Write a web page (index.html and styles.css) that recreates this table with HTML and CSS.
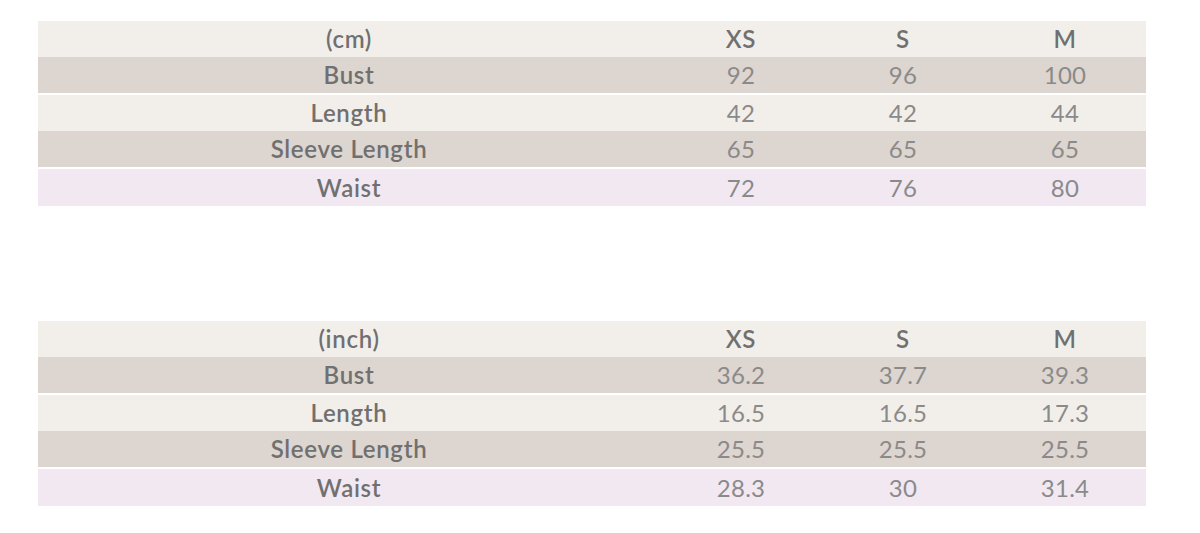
FILE: index.html
```html
<!DOCTYPE html>
<html>
<head>
<meta charset="utf-8">
<link rel="stylesheet" href="styles.css">
</head>
<body>
<div class="page">
  <table class="size-table">
    <colgroup><col class="c-label"><col class="c-size"><col class="c-size"><col class="c-size"></colgroup>
    <tr class="row-light head"><th>(cm)</th><th>XS</th><th>S</th><th>M</th></tr>
    <tr class="row-dark gap"><th>Bust</th><td>92</td><td>96</td><td>100</td></tr>
    <tr class="row-light"><th>Length</th><td>42</td><td>42</td><td>44</td></tr>
    <tr class="row-dark gap"><th>Sleeve Length</th><td>65</td><td>65</td><td>65</td></tr>
    <tr class="row-pink"><th>Waist</th><td>72</td><td>76</td><td>80</td></tr>
  </table>
  <table class="size-table">
    <colgroup><col class="c-label"><col class="c-size"><col class="c-size"><col class="c-size"></colgroup>
    <tr class="row-light head"><th>(inch)</th><th>XS</th><th>S</th><th>M</th></tr>
    <tr class="row-dark gap"><th>Bust</th><td>36.2</td><td>37.7</td><td>39.3</td></tr>
    <tr class="row-light"><th>Length</th><td>16.5</td><td>16.5</td><td>17.3</td></tr>
    <tr class="row-dark gap"><th>Sleeve Length</th><td>25.5</td><td>25.5</td><td>25.5</td></tr>
    <tr class="row-pink"><th>Waist</th><td>28.3</td><td>30</td><td>31.4</td></tr>
  </table>
</div>
</body>
</html>
```
FILE: styles.css
```css
html, body {
  margin: 0;
  padding: 0;
  background: #ffffff;
}
.page {
  padding: 21px 0 0 38px;
  display: flex;
  flex-direction: column;
  gap: 115px;
}
.size-table {
  width: 1108px;
  border-collapse: collapse;
  table-layout: fixed;
  font-family: Lato, "Open Sans", sans-serif;
  font-size: 24px;
}
.c-label { width: 622px; }
.c-size { width: 162px; }
.size-table th,
.size-table td {
  height: 36px;
  padding: 0;
  text-align: center;
  vertical-align: middle;
  line-height: 36px;
}
.size-table th {
  font-weight: 600;
  color: #707070;
  letter-spacing: 0.7px;
}
.size-table td {
  font-weight: 400;
  color: #8a8a8a;
  letter-spacing: 0.3px;
}
.row-light { background: #f2efea; }
.row-dark { background: #ddd5cf; }
.row-pink { background: #f2e8f2; }
.gap th, .gap td { border-bottom: 2px solid #ffffff; }
.row-pink th, .row-pink td { height: 37px; }
```
